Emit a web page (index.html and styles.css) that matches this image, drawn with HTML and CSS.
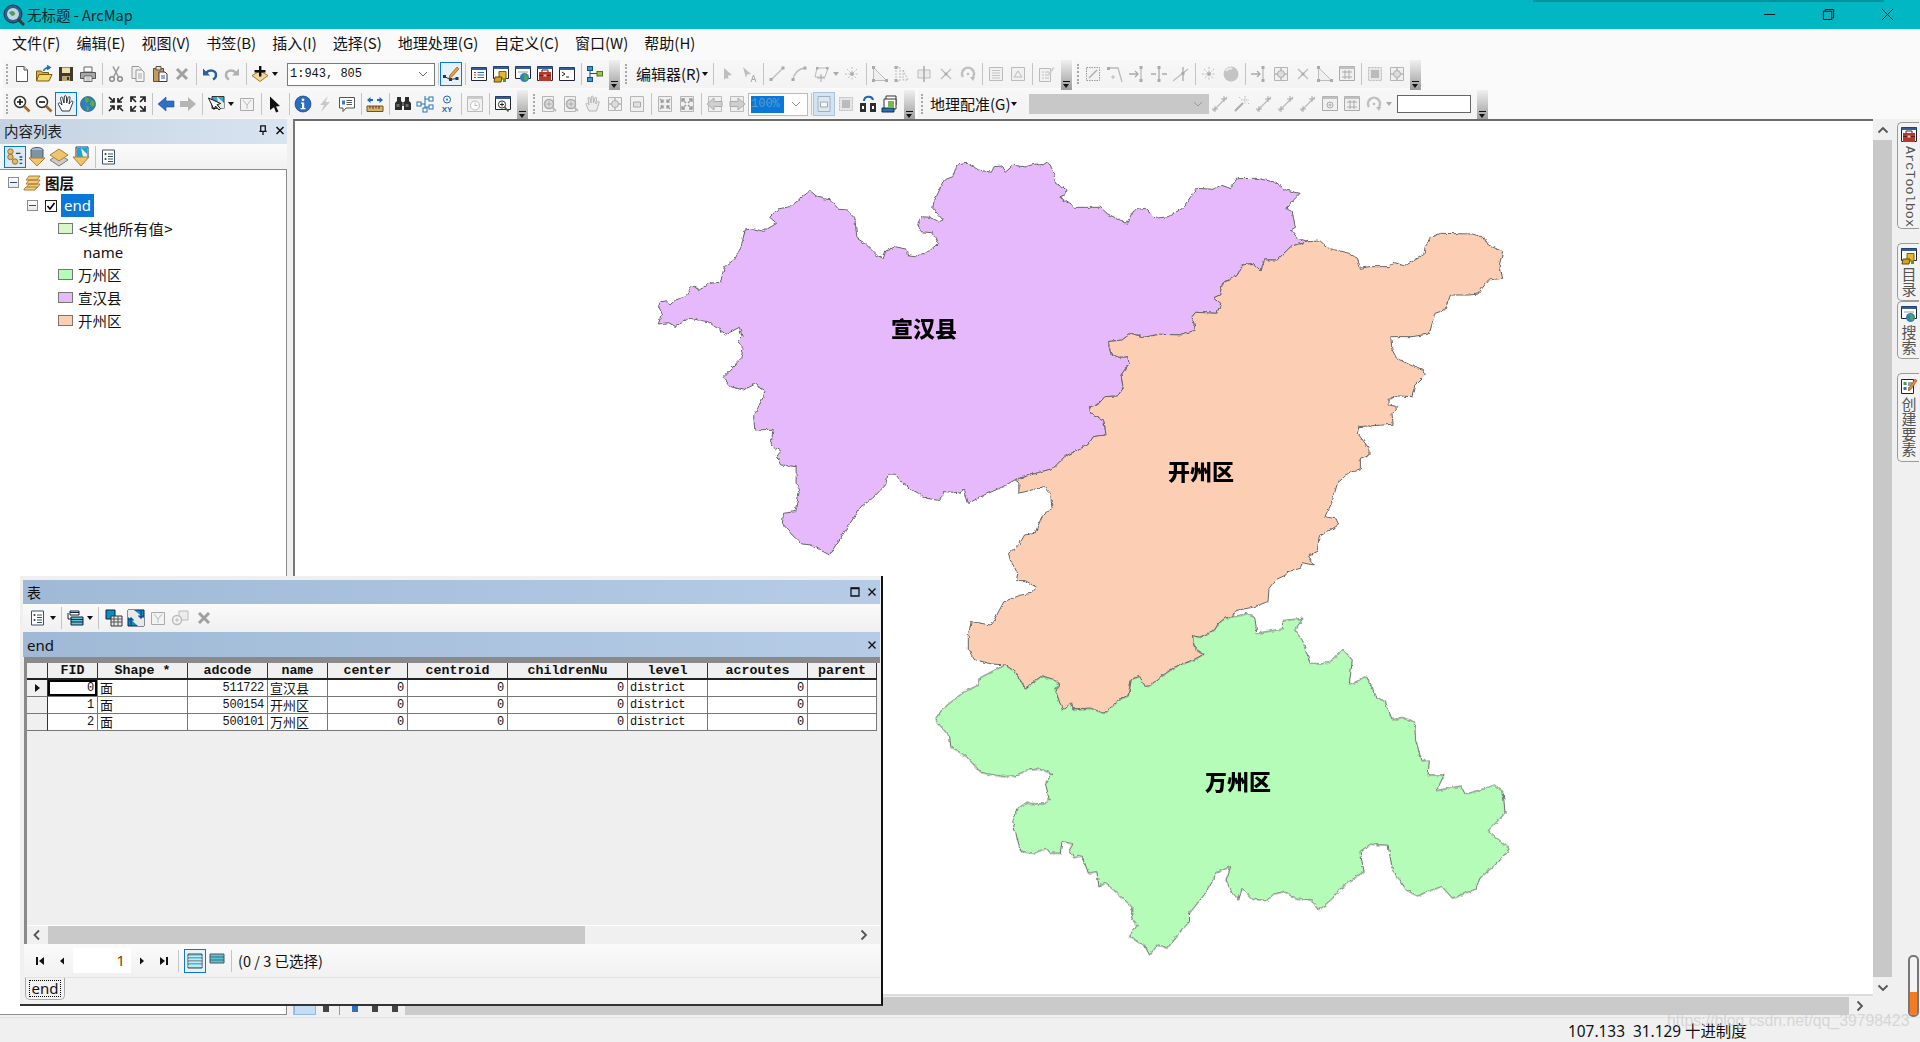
FILE: index.html
```html
<!DOCTYPE html>
<html lang="zh">
<head>
<meta charset="utf-8">
<title>无标题 - ArcMap</title>
<link rel="stylesheet" href="styles.css">
</head>
<body>
<svg class="defs" width="0" height="0">
<defs>
<symbol id="new" viewBox="0 0 18 18"><path d="M3.5 1.5h7.5l3.5 3.5v11.500H3.500z" fill="#fff" stroke="#555"/><path d="M11 1.500V5h3.500" fill="#ddd" stroke="#555"/></symbol>
<symbol id="open" viewBox="0 0 18 18"><path d="M1.500 16V6h5l1 1.500h6V10" fill="#d9b040" stroke="#7a5a10"/><path d="M1.500 16 4 9.500h13L14 16z" fill="#f5d76b" stroke="#7a5a10"/><path d="M8.500 6c1-2.500 3-3.500 5.500-3.500M12 .5l3 2-3 2" fill="none" stroke="#1d6fb8" stroke-width="1.600"/></symbol>
<symbol id="save" viewBox="0 0 18 18"><path d="M2 2h14v14H2z" fill="#40392e"/><path d="M5 2.500h8V8H5z" fill="#f0dfae"/><path d="M5 11h8v5H5z" fill="#b9a46f"/><path d="M10 12h2v3h-2z" fill="#333"/></symbol>
<symbol id="print" viewBox="0 0 18 18"><path d="M5 2h8v5H5z" fill="#fff" stroke="#666"/><path d="M1.500 7.500h15v6h-15z" fill="#a8a8a8" stroke="#555"/><path d="M5 11h8v5.500H5z" fill="#fff" stroke="#666"/><path d="M6.500 13h5M6.500 15h5" stroke="#999"/></symbol>
<symbol id="cut" viewBox="0 0 18 18"><circle cx="5" cy="14" r="2.300" fill="none" stroke="#8a8a8a" stroke-width="1.500"/><circle cx="13" cy="14" r="2.300" fill="none" stroke="#8a8a8a" stroke-width="1.500"/><path d="M6.500 12 12 1.500M11.500 12 6 1.500" stroke="#9a9a9a" stroke-width="1.600" fill="none"/></symbol>
<symbol id="copy" viewBox="0 0 18 18"><path d="M3 1.500h7l2 2v10H3z" fill="#eee" stroke="#999"/><path d="M7 5h6l2 2v9.500H7z" fill="#f5f5f5" stroke="#999"/><path d="M9 9h4M9 11h4M9 13h4" stroke="#aaa"/></symbol>
<symbol id="paste" viewBox="0 0 18 18"><path d="M2.500 3.500h10v13h-10z" fill="#c99a55" stroke="#6d4c1c"/><path d="M5 1.500h5v3.500H5z" fill="#ddd" stroke="#555"/><path d="M8 7h6l2 2v7.500H8z" fill="#fff" stroke="#335"/><path d="M10 11h4M10 13h4" stroke="#2a5da8"/></symbol>
<symbol id="del" viewBox="0 0 18 18"><path d="M4 4l10 10M14 4 4 14" stroke="#a0a0a0" stroke-width="3"/></symbol>
<symbol id="undo" viewBox="0 0 18 18"><path d="M5 8c3-4 10-3 10 2 0 2-1 3.500-3 4.500" fill="none" stroke="#2c5f9e" stroke-width="2.400"/><path d="M2 3.500v7h7z" fill="#2c5f9e"/></symbol>
<symbol id="redo" viewBox="0 0 18 18"><path d="M13 8C10 4 3 5 3 10c0 2 1 3.500 3 4.500" fill="none" stroke="#b0b0b0" stroke-width="2.400"/><path d="M16 3.500v7H9z" fill="#b0b0b0"/></symbol>
<symbol id="add" viewBox="0 0 18 18"><path d="M1 10.500 9 6l8 4.500-8 6z" fill="#f3d89b" stroke="#a97a20"/><path d="M8 1h2.400v4H14.500v2.400h-4.100v4H8v-4H3.500V5H8z" fill="#111"/></symbol>
<symbol id="edit" viewBox="0 0 18 18"><path d="M2.500 11.500 8 14.500l7-1" fill="none" stroke="#333"/><rect x="1" y="10" width="3" height="3" fill="#334"/><rect x="7" y="13" width="3" height="3" fill="#334"/><rect x="13.500" y="12" width="3" height="3" fill="#334"/><path d="M8 10 15 2l2 1.800-7 8-3 1z" fill="#f09a3c" stroke="#9a5a10" stroke-width=".7"/></symbol>
<symbol id="w-toc" viewBox="0 0 18 18"><path d="M1.500 2.500h15v13h-15z" fill="#fff" stroke="#223"/><path d="M1.500 2.500h15V5h-15z" fill="#2f5f9f"/><path d="M4 7.500h2M4 10h2M4 12.500h2" stroke="#d33"/><path d="M7.500 7.500H14M7.500 10H14M7.500 12.500H14" stroke="#2a6fb8"/></symbol>
<symbol id="w-cat" viewBox="0 0 18 18"><path d="M1.500 1.500h15v12h-15z" fill="#fff" stroke="#223"/><path d="M1.500 1.500h15V4h-15z" fill="#2f5f9f"/><path d="M7 6.500h7V14H7z" fill="#e3b72e" stroke="#7a5f10"/><path d="M3 12h7l-1 5H2z" fill="#d1a51f" stroke="#5c4a10"/><rect x="11" y="14" width="3" height="3" fill="#3c9d4a"/></symbol>
<symbol id="w-search" viewBox="0 0 18 18"><path d="M1.500 1.500h15v12h-15z" fill="#fff" stroke="#223"/><path d="M1.500 1.500h15V4h-15z" fill="#2f5f9f"/><path d="M4 6h10v2H4z" fill="#ccd"/><circle cx="10.500" cy="12.500" r="4.500" fill="#2d7fc4"/><path d="M8 10c2 0 3 1 2 3s2 3 3 2l1-3-3-3z" fill="#56a845"/></symbol>
<symbol id="w-box" viewBox="0 0 18 18"><path d="M1.500 1.500h15v14h-15z" fill="#fff" stroke="#223"/><path d="M1.500 1.500h15V4h-15z" fill="#2f5f9f"/><path d="M3 7h12v9H3z" fill="#b5382f"/><path d="M6 7V5h6v2" fill="none" stroke="#5c1a14"/><path d="M3 10.500h12" stroke="#6d1c15"/><path d="M7.500 9.500h3v2h-3z" fill="#e0d0b0"/></symbol>
<symbol id="w-py" viewBox="0 0 18 18"><path d="M1.500 2.500h15v13h-15z" fill="#fff" stroke="#223"/><path d="M1.500 2.500h15V5h-15z" fill="#2f5f9f"/><path d="M4 7l3 2-3 2M8 12h3" fill="none" stroke="#222"/></symbol>
<symbol id="w-cre" viewBox="0 0 18 18"><path d="M1.500 2.500h12v14h-12z" fill="#fff" stroke="#223"/><path d="M3.500 5h3v3h-3z" fill="#3aa14a"/><path d="M3.500 10h3v3h-3z" fill="#2f6fc0"/><path d="M8 6h4M8 8h3M8 11h2M8 13h2" stroke="#345"/><path d="M9 11l6-9 2 1.500-6 9-2.500 1z" fill="#e88a3a" stroke="#8a4a10" stroke-width=".6"/></symbol>
<symbol id="model" viewBox="0 0 18 18"><rect x="1.500" y="1.500" width="5" height="4" fill="#3a9bd8" stroke="#14507c"/><rect x="1.500" y="12.500" width="5" height="4" fill="#3a9bd8" stroke="#14507c"/><rect x="11" y="6.500" width="5.500" height="4.500" fill="#9cc64a" stroke="#55731a"/><path d="M4 5.500v7M4 8.500h7" stroke="#14507c"/></symbol>
<symbol id="zin" viewBox="0 0 18 18"><circle cx="7" cy="7" r="5.500" fill="#fff" stroke="#333" stroke-width="1.500"/><path d="M4 7h6M7 4v6" stroke="#111" stroke-width="1.600"/><path d="M11 11l5.500 5.500" stroke="#a8662a" stroke-width="2.600"/></symbol>
<symbol id="zout" viewBox="0 0 18 18"><circle cx="7" cy="7" r="5.500" fill="#fff" stroke="#333" stroke-width="1.500"/><path d="M4 7h6" stroke="#111" stroke-width="1.600"/><path d="M11 11l5.500 5.500" stroke="#a8662a" stroke-width="2.600"/></symbol>
<symbol id="pan" viewBox="0 0 18 18"><path d="M5 16 1.500 9.500c-.7-1.500 1-2.300 2-1L5 10 3.500 3.500c-.3-1.600 1.700-2 2.200-.5L7 8 7.300 1.800c.1-1.500 2-1.500 2.100 0L9.700 8l1.400-5.500c.4-1.400 2.200-1 2 .5L12 9l2-2.500c1-1.200 2.600-.2 1.800 1.200L12.500 16z" fill="#fff" stroke="#222" stroke-width=".9"/></symbol>
<symbol id="globe" viewBox="0 0 18 18"><circle cx="9" cy="9" r="7.500" fill="#2d7fc4" stroke="#2a5a80" stroke-width=".7"/><path d="M6 2.500c3 0 5 1 4 3S6 8 7 10s3 1 3 3-1 3-2 3.300M12 5c2 0 4 2 4 5l-3 2-2-3z" fill="#5faa3e"/></symbol>
<symbol id="fin" viewBox="0 0 18 18"><path d="M2 2l5 5M7 3v4H3M16 2l-5 5M11 3v4h4M2 16l5-5M7 15v-4H3M16 16l-5-5M11 15v-4h4" fill="none" stroke="#222" stroke-width="1.700"/></symbol>
<symbol id="fout" viewBox="0 0 18 18"><path d="M7 7 2.500 2.500M2 7V2h5M11 7l4.500-4.500M16 7V2h-5M7 11l-4.500 4.500M2 11v5h5M11 11l4.500 4.500M16 11v5h-5" fill="none" stroke="#222" stroke-width="1.700"/></symbol>
<symbol id="back" viewBox="0 0 18 18"><path d="M1 9l8-7v4h8v6H9v4z" fill="#2e6fc8" stroke="#1b4f9c" stroke-width=".6"/></symbol>
<symbol id="fwd" viewBox="0 0 18 18"><path d="M17 9 9 2v4H1v6h8v4z" fill="#b5b5b5"/></symbol>
<symbol id="sel" viewBox="0 0 18 18"><path d="M5 1.500h12v12H5z" fill="#2fa8d8" stroke="#333"/><path d="M10 1.500 17 8v5.500h-5z" fill="#e8e8e8"/><path d="M1.500 3 7 14.500l1.600-3.500 3.400 4 1.500-1.300-3.400-4 3.500-1.200z" fill="#fff" stroke="#111"/></symbol>
<symbol id="clr" viewBox="0 0 18 18"><path d="M2.500 3.500h13v12h-13z" fill="#f3f3f3" stroke="#aaa"/><path d="M5 5l4 5 4-5M9 10v4" fill="none" stroke="#bbb"/></symbol>
<symbol id="ptr" viewBox="0 0 18 18"><path d="M4 1.500 14 11l-4 .5 2.500 5-2.500 1-2-5.200L4 15z" fill="#111"/></symbol>
<symbol id="info" viewBox="0 0 18 18"><circle cx="9" cy="9" r="8" fill="#2a6cc0" stroke="#16407a" stroke-width=".7"/><circle cx="9" cy="4.800" r="1.400" fill="#fff"/><path d="M7 7.500h3.200V13H11.500v1.300h-5V13H8V8.800H7z" fill="#fff"/></symbol>
<symbol id="bolt" viewBox="0 0 18 18"><path d="M12 1 4 10h4l-3 7 9-10h-4.500z" fill="#c9c9c9"/></symbol>
<symbol id="pop" viewBox="0 0 18 18"><path d="M1.500 2.500h15V13H8l-3 3.500V13H1.500z" fill="#fff" stroke="#555"/><path d="M4 5.500h3v4H4z" fill="#3a7fc4"/><path d="M8.500 5.500h5.500M8.500 7.500h5.500M8.500 9.500h5.500" stroke="#555"/></symbol>
<symbol id="meas" viewBox="0 0 18 18"><path d="M1 11h16v5.500H1z" fill="#d8b26a" stroke="#6d5420"/><path d="M4 11v2.500M7 11v3M10 11v2.500M13 11v3" stroke="#4d3c16"/><path d="M1 5l3.500-3v2h2.500v2H4.500v2zM17 5l-3.500-3v2H11v2h2.500v2z" fill="#1e66bc"/></symbol>
<symbol id="find" viewBox="0 0 18 18"><path d="M3 2h4v4l1 1v8H1V8l2-2zM11 2h4v4l2 2v7h-7V7l1-1z" fill="#2c2c2c"/><path d="M8 7h2v4H8z" fill="#666"/><path d="M2.500 9h3v3h-3zM11.500 9h3v3h-3z" fill="#6a6a6a"/></symbol>
<symbol id="route" viewBox="0 0 18 18"><path d="M9 1v14M3 9h6M9 4h6M9 12h6" stroke="#2570b8" fill="none"/><rect x="1" y="7" width="4" height="4" fill="#fff" stroke="#2570b8"/><rect x="7" y="13" width="4" height="4" fill="#fff" stroke="#2570b8"/><rect x="13" y="2" width="4" height="4" fill="#fff" stroke="#2570b8"/><rect x="13" y="10" width="4" height="4" fill="#fff" stroke="#2570b8"/></symbol>
<symbol id="clock" viewBox="0 0 18 18"><path d="M1.500 1.500h15v15h-15z" fill="#f1f1f1" stroke="#bbb"/><path d="M1.500 1.500h15V4h-15z" fill="#ccc"/><circle cx="9" cy="10.500" r="4.500" fill="#fff" stroke="#bbb"/><path d="M9 7.500v3h2.500" fill="none" stroke="#bbb"/></symbol>
<symbol id="view" viewBox="0 0 18 18"><path d="M1.500 1.500h15v13h-15z" fill="#fff" stroke="#223"/><path d="M1.500 1.500h15V4h-15z" fill="#2f5f9f"/><circle cx="8" cy="9.500" r="3.600" fill="#fff" stroke="#333"/><path d="M6 9.500h4M8 7.500v4" stroke="#222"/><path d="M10.500 12l4 4.500" stroke="#555" stroke-width="1.800"/></symbol>
<symbol id="g-pz" viewBox="0 0 18 18"><path d="M2.500 1.500h11v15h-11z" fill="#f0f0f0" stroke="#b5b5b5"/><circle cx="9" cy="9" r="4.500" fill="#ddd" stroke="#aaa" stroke-width="1.500"/><path d="M6.500 9h5M9 6.500v5" stroke="#aaa"/><path d="M12 12l4 4" stroke="#bbb" stroke-width="2"/></symbol>
<symbol id="g-pan" viewBox="0 0 18 18"><path d="M5 16 2 9.500c-.6-1.300 1-2 1.800-1L5 10 4 3.500c-.2-1.400 1.500-1.700 1.900-.4L7 8l.3-6c0-1.300 1.800-1.300 1.900 0L9.500 8l1.300-5c.4-1.200 2-.9 1.800.4L11.700 9l1.800-2.200c.9-1.100 2.300-.2 1.600 1L12.500 16z" fill="#ececec" stroke="#b5b5b5"/></symbol>
<symbol id="g-fit" viewBox="0 0 18 18"><path d="M2.500 2.500h13v13h-13z" fill="#f0f0f0" stroke="#b5b5b5"/><circle cx="9" cy="9" r="3.500" fill="#ddd" stroke="#aaa"/><path d="M9 3v2M9 13v2M3 9h2M13 9h2" stroke="#999"/></symbol>
<symbol id="g-pg" viewBox="0 0 18 18"><path d="M2.500 1.500h13v15h-13z" fill="#f0f0f0" stroke="#b5b5b5"/><path d="M5.500 7h7v5h-7z" fill="#e0e0e0" stroke="#aaa"/></symbol>
<symbol id="g-fin" viewBox="0 0 18 18"><path d="M2.500 1.500h13v15h-13z" fill="#efefef" stroke="#b5b5b5"/><path d="M4 4l3 3M7 4.500V7H4.500M14 4l-3 3M11 4.500V7h2.500M4 14l3-3M7 13.500V11H4.500M14 14l-3-3M11 13.500V11h2.500" fill="none" stroke="#999" stroke-width="1.300"/></symbol>
<symbol id="g-fout" viewBox="0 0 18 18"><path d="M2.500 1.500h13v15h-13z" fill="#efefef" stroke="#b5b5b5"/><path d="M8 8 4 4M4 7V4h3M10 8l4-4M14 7V4h-3M8 10l-4 4M4 11v3h3M10 10l4 4M14 11v3h-3" fill="none" stroke="#999" stroke-width="1.300"/></symbol>
<symbol id="g-bk" viewBox="0 0 18 18"><path d="M2.500 1.500h13v15h-13z" fill="#efefef" stroke="#bbb"/><path d="M1 9l7-6v3.500h8v5H8V15z" fill="#cfcfcf" stroke="#aaa"/></symbol>
<symbol id="g-fw" viewBox="0 0 18 18"><path d="M2.500 1.500h13v15h-13z" fill="#efefef" stroke="#bbb"/><path d="M17 9l-7-6v3.500H2v5h8V15z" fill="#cfcfcf" stroke="#aaa"/></symbol>
<symbol id="g-dots" viewBox="0 0 18 18"><path d="M2.500 2.500h13v13h-13z" fill="#e6e6e6" stroke="#bbb" stroke-dasharray="2 1"/><path d="M5 5h8v8H5z" fill="#bbb"/></symbol>
<symbol id="layout" viewBox="0 0 18 18"><path d="M3 1.500h12v15H3z" fill="#e0e6ee" stroke="#9cb0c6"/><path d="M5.500 7h7v5h-7z" fill="#f6f6f6" stroke="#9aa"/></symbol>
<symbol id="lock" viewBox="0 0 18 18"><path d="M5 6c0-5 8-6 9-1" fill="none" stroke="#1e66bc" stroke-width="2"/><path d="M1 8h6v9H1zM11 8h6v9h-6z" fill="#2e2e2e"/><path d="M3 11h2v3H3zM13 11h2v3h-2z" fill="#fff"/></symbol>
<symbol id="pages" viewBox="0 0 18 18"><path d="M5 1h10v9H5z" fill="#fff" stroke="#333"/><path d="M3 4h12v10H3z" fill="#fff" stroke="#333"/><path d="M7 6h6v6H7z" fill="#7ab648"/><path d="M1 13h12v4H1z" fill="#2a6fb8" stroke="#134"/></symbol>
<symbol id="g-arr" viewBox="0 0 18 18"><path d="M6 3l8 7-4 .5.500 3.500L8 13l-2 2z" fill="#bdbdbd"/></symbol>
<symbol id="g-arra" viewBox="0 0 18 18"><path d="M3 2l8 7-4 .5L6 13z" fill="#bdbdbd"/><path d="M11 17l2.500-7 2.500 7M12 14.500h3" fill="none" stroke="#aaa"/></symbol>
<symbol id="g-line" viewBox="0 0 18 18"><path d="M3 15 15 3" stroke="#bbb" stroke-width="1.300"/><rect x="1.500" y="13" width="3" height="3" fill="#aaa"/><rect x="13.500" y="1.500" width="3" height="3" fill="#aaa"/></symbol>
<symbol id="g-curve" viewBox="0 0 18 18"><path d="M3 15C4 8 8 4 15 3" fill="none" stroke="#bbb" stroke-width="1.300"/><rect x="1.500" y="13" width="3" height="3" fill="#aaa"/><rect x="13.500" y="1.500" width="3" height="3" fill="#aaa"/></symbol>
<symbol id="g-poly" viewBox="0 0 18 18"><path d="M5 3h11l-3 9H3z" fill="none" stroke="#bbb"/><path d="M9 9v8M5 13h8" stroke="#aaa"/><rect x="4" y="2" width="2.500" height="2.500" fill="#aaa"/><rect x="14" y="2" width="2.500" height="2.500" fill="#aaa"/></symbol>
<symbol id="g-star" viewBox="0 0 18 18"><path d="M9 2v14M2 9h14M4 4l10 10M14 4 4 14" stroke="#bbb" stroke-dasharray="2 1.500"/><circle cx="9" cy="9" r="1.800" fill="#aaa"/></symbol>
<symbol id="g-tri" viewBox="0 0 18 18"><path d="M2.500 2.500v13h13z" fill="#efefef" stroke="#bbb"/><rect x="1" y="1" width="3" height="3" fill="#aaa"/><rect x="1" y="14" width="3" height="3" fill="#aaa"/><rect x="14" y="14" width="3" height="3" fill="#aaa"/></symbol>
<symbol id="g-split" viewBox="0 0 18 18"><path d="M3 2v14h4V2zM10 5l5 10h-5z" fill="none" stroke="#bbb" stroke-dasharray="2 1"/><rect x="1.500" y="1" width="3" height="3" fill="#aaa"/><rect x="1.500" y="14" width="3" height="3" fill="#aaa"/></symbol>
<symbol id="g-cross" viewBox="0 0 18 18"><path d="M3 5h12v8H3z" fill="#ececec" stroke="#bbb"/><path d="M9 1v16" stroke="#aaa" stroke-width="1.500"/></symbol>
<symbol id="g-x" viewBox="0 0 18 18"><path d="M4 14 14 4M4 4l10 10" stroke="#bbb" stroke-width="1.300"/><circle cx="9" cy="9" r="1.500" fill="#aaa"/></symbol>
<symbol id="g-rot" viewBox="0 0 18 18"><path d="M4 12a6 6 0 1 1 10 0" fill="none" stroke="#c0c0c0" stroke-width="2.600"/><path d="M11 12l3 4 2-4z" fill="#bbb"/><circle cx="9" cy="9" r="1.300" fill="#bbb"/></symbol>
<symbol id="g-tbl" viewBox="0 0 18 18"><path d="M2.500 2.500h13v13h-13z" fill="#f1f1f1" stroke="#bbb"/><path d="M5 5.500h8M5 8h8M5 10.500h8M5 13h8" stroke="#c4c4c4"/></symbol>
<symbol id="g-prop" viewBox="0 0 18 18"><path d="M2.500 2.500h13v13h-13z" fill="#f1f1f1" stroke="#bbb"/><path d="M5 12l4-6 4 6z" fill="none" stroke="#bbb"/></symbol>
<symbol id="g-sk" viewBox="0 0 18 18"><path d="M2.500 3.500h11v13h-11z" fill="#f1f1f1" stroke="#bbb"/><path d="M5 7h2M8 7h4M5 10h2M8 10h4M5 13h2M8 13h4" stroke="#c0c0c0"/><path d="M11 9l5-7 1.500 1-5 7z" fill="#cfcfcf"/></symbol>
<symbol id="g-rect" viewBox="0 0 18 18"><path d="M2.500 2.500h13v13h-13z" fill="#f2f2f2" stroke="#999" stroke-dasharray="1.500 1"/><path d="M5 13 13 5" stroke="#aaa" stroke-width="1.300"/></symbol>
<symbol id="g-bend" viewBox="0 0 18 18"><path d="M2 3h10l4 14" fill="none" stroke="#bbb" stroke-width="1.300"/><rect x="1" y="2" width="3" height="3" fill="#aaa"/><path d="M5 12h4M7 10v4" stroke="#bbb"/></symbol>
<symbol id="g-ext" viewBox="0 0 18 18"><path d="M1 9h9M7 6l3 3-3 3" fill="none" stroke="#aaa" stroke-width="1.300"/><path d="M13 1v16" stroke="#bbb" stroke-width="1.300"/><rect x="11.500" y="1" width="3" height="3" fill="#aaa"/><rect x="11.500" y="14" width="3" height="3" fill="#aaa"/></symbol>
<symbol id="g-plus" viewBox="0 0 18 18"><path d="M9 1v16M1 9h5M12 9h5" stroke="#aaa" stroke-width="1.300"/><rect x="7.500" y="1" width="3" height="3" fill="#aaa"/><rect x="7.500" y="14" width="3" height="3" fill="#aaa"/></symbol>
<symbol id="g-trim" viewBox="0 0 18 18"><path d="M1 16 16 4" stroke="#bbb" stroke-width="1.300"/><path d="M11 2v14" stroke="#aaa" stroke-width="1.300"/><rect x="9.500" y="7" width="3" height="3" fill="#aaa"/></symbol>
<symbol id="g-ball" viewBox="0 0 18 18"><circle cx="9" cy="9" r="7.500" fill="#c4c4c4"/><path d="M4 6c2-3 5-3 6-2" stroke="#eee" stroke-width="2" fill="none"/></symbol>
<symbol id="g-gcp" viewBox="0 0 18 18"><path d="M2 16 16 2" stroke="#bbb" stroke-width="1.200"/><path d="M13 1v6M10 4h6M4 11v6M1 14h6" stroke="#aaa"/></symbol>
<symbol id="g-wand" viewBox="0 0 18 18"><path d="M2 16 10 8" stroke="#aaa" stroke-width="2"/><path d="M12 1v8M8 5h8M6 2l2 2M16 9l-2-2" stroke="#bbb" stroke-dasharray="1.500 1"/></symbol>
<symbol id="g-win" viewBox="0 0 18 18"><path d="M1.500 1.500h15v14h-15z" fill="#f0f0f0" stroke="#aaa"/><path d="M1.500 1.500h15V4h-15z" fill="#c0c0c0"/><circle cx="9" cy="10" r="3" fill="none" stroke="#aaa"/><path d="M7.500 10h3M9 8.500v3" stroke="#aaa"/></symbol>
<symbol id="g-win2" viewBox="0 0 18 18"><path d="M1.500 1.500h15v14h-15z" fill="#f0f0f0" stroke="#aaa"/><path d="M1.500 1.500h15V4h-15z" fill="#c0c0c0"/><path d="M4 7h10M4 12h10M7 5v9M11 5v9" stroke="#aaa"/></symbol>
<symbol id="t-opt" viewBox="0 0 18 18"><path d="M2.500 2h12v14h-12z" fill="#fff" stroke="#3a4f6a"/><circle cx="5.500" cy="6" r="1" fill="#333"/><circle cx="5.500" cy="11" r="1" fill="#333"/><path d="M8 6h5M8 8.500h5M8 11h5M8 13.500h5" stroke="#3a4f6a"/></symbol>
<symbol id="t-rel" viewBox="0 0 18 18"><path d="M4 2h9v4H4z" fill="#fff" stroke="#123"/><path d="M4 3.500H13" stroke="#123"/><path d="M5 8h12v8H5z" fill="#5bc2dc" stroke="#123"/><path d="M5 10.500h12M5 13h12" stroke="#123"/><path d="M2 4v6h3" fill="none" stroke="#123"/></symbol>
<symbol id="t-sel" viewBox="0 0 18 18"><path d="M1 1h9v9H1z" fill="#0a8fc4" stroke="#123"/><path d="M6 7h11v10H6z" fill="#e8e8e8" stroke="#333"/><path d="M6 10h11M6 13h11M9 7v10M13 7v10" stroke="#555"/></symbol>
<symbol id="t-sw" viewBox="0 0 18 18"><path d="M1 1h16v16H1z" fill="#0a8fc4" stroke="#123"/><path d="M7 1l10 8v8h-6L1 8V1z" fill="#e8e8e8"/><path d="M4 17V9M1.500 11.500 4 9l2.500 2.500M14 1v8M11.500 6.500 14 9l2.500-2.500" fill="none" stroke="#0c4da0" stroke-width="1.500"/></symbol>
<symbol id="t-zoom" viewBox="0 0 18 18"><path d="M8 2h9v9H8z" fill="#ececec" stroke="#bbb"/><circle cx="6" cy="11" r="4.500" fill="#f4f4f4" stroke="#bbb" stroke-width="1.500"/><path d="M4 11h4M6 9v4" stroke="#bbb"/></symbol>
<symbol id="bar-all" viewBox="0 0 18 18"><path d="M2 2h14v14H2z" fill="#7bd3e6" stroke="#444"/><path d="M2 5h14M2 8h14M2 11h14M2 14h14" stroke="#fff"/><path d="M2 5.500h14M2 8.500h14M2 11.500h14" stroke="#555" stroke-width=".5"/></symbol>
<symbol id="bar-sel" viewBox="0 0 18 18"><path d="M2 2h14v9H2z" fill="#5bc2dc" stroke="#555"/><path d="M2 5h14M2 8h14" stroke="#333" stroke-width=".6"/></symbol>
<symbol id="tree-lyr" viewBox="0 0 18 18"><path d="M3 6 6 2h11l-3 4zM3 10l3-4h11l-3 4zM3 14l3-4h11l-3 4z" fill="#f3c876" stroke="#a9803a"/><path d="M1 15l2-2h11l-2 3H1z" fill="#f3c876" stroke="#a9803a"/></symbol>
<symbol id="toc-list" viewBox="0 0 22 22"><circle cx="6" cy="5" r="3" fill="#e7bb62" stroke="#8c6c2b"/><circle cx="6" cy="11" r="3" fill="#e7bb62" stroke="#8c6c2b"/><circle cx="11" cy="16" r="3" fill="#e7bb62" stroke="#8c6c2b"/><path d="M12 7h5M16 11h3M16 14h3M16 18h3" stroke="#345" stroke-width="1.400"/></symbol>
<symbol id="toc-src" viewBox="0 0 22 22"><ellipse cx="11" cy="4" rx="6" ry="2.500" fill="#a8bdd0" stroke="#4a5a6a"/><path d="M5 4v8c0 3 12 3 12 0V4" fill="#7e93a8" stroke="#4a5a6a"/><path d="M3 12l8 8 8-8z" fill="#f1c36a" stroke="#a9803a"/></symbol>
<symbol id="toc-vis" viewBox="0 0 22 22"><path d="M2 14l9-6 9 6-9 6z" fill="#ccc" stroke="#777"/><path d="M2 9l9-6 9 6-9 6z" fill="#f1c36a" stroke="#a9803a"/></symbol>
<symbol id="toc-sel" viewBox="0 0 22 22"><path d="M6 1h12v11H6z" fill="#fff" stroke="#234"/><path d="M7 2h10v9H7z" fill="#1aa6d3"/><path d="M11 2l6 6v3h-4z" fill="#eee"/><path d="M3 11l8 9 8-9z" fill="#f1c36a" stroke="#a9803a"/></symbol>
</defs>
</svg>

<header class="titlebar">
  <svg class="app-ic" viewBox="0 0 22 22"><circle cx="10" cy="10" r="9" fill="#27608a" stroke="#16384e"/><circle cx="10" cy="10" r="6" fill="#bcd6e4"/><path d="M6 9c2-3 5-2 6 0s-2 3-3 3z" fill="#5a9a58"/><path d="M15 15l6 6" stroke="#3a3a3a" stroke-width="3"/></svg>
  <span class="app-name">无标题 - ArcMap</span>
  <span class="win-shadow"></span>
  <span class="win-btn"><svg viewBox="0 0 14 14"><path d="M1 7h12" stroke="#111"/></svg></span>
  <span class="win-btn"><svg viewBox="0 0 14 14"><path d="M1.500 3.500h9v9h-9zM3.500 3.500v-2h9v9h-2" fill="none" stroke="#111" stroke-width="1.100"/></svg></span>
  <span class="win-btn"><svg viewBox="0 0 14 14"><path d="M1 1l12 12M13 1 1 13" stroke="#111"/></svg></span>
</header>

<nav class="menubar">
  <span class="mi">文件(F)</span><span class="mi">编辑(E)</span><span class="mi">视图(V)</span><span class="mi">书签(B)</span><span class="mi">插入(I)</span><span class="mi">选择(S)</span><span class="mi">地理处理(G)</span><span class="mi">自定义(C)</span><span class="mi">窗口(W)</span><span class="mi">帮助(H)</span>
</nav>

<div class="tbrow r1">
  <div class="tb t11">
    <span class="b"><svg class="i"><use href="#new"/></svg></span><span class="b"><svg class="i"><use href="#open"/></svg></span><span class="b"><svg class="i"><use href="#save"/></svg></span><span class="b"><svg class="i"><use href="#print"/></svg></span><span class="s"></span>
    <span class="b"><svg class="i"><use href="#cut"/></svg></span><span class="b"><svg class="i"><use href="#copy"/></svg></span><span class="b"><svg class="i"><use href="#paste"/></svg></span><span class="b"><svg class="i"><use href="#del"/></svg></span><span class="s"></span>
    <span class="b"><svg class="i"><use href="#undo"/></svg></span><span class="b"><svg class="i"><use href="#redo"/></svg></span><span class="s"></span>
    <span class="b"><svg class="i"><use href="#add"/></svg></span><span class="dd"></span>
    <span class="combo scale">1:943, 805<svg class="chev" viewBox="0 0 10 6"><path d="M1 1l4 4 4-4" fill="none" stroke="#666"/></svg></span>
    <span class="s thin"></span><span class="b on"><svg class="i"><use href="#edit"/></svg></span><span class="s"></span>
    <span class="b"><svg class="i"><use href="#w-toc"/></svg></span><span class="b"><svg class="i"><use href="#w-cat"/></svg></span><span class="b"><svg class="i"><use href="#w-search"/></svg></span><span class="b"><svg class="i"><use href="#w-box"/></svg></span><span class="b"><svg class="i"><use href="#w-py"/></svg></span><span class="s"></span>
    <span class="b"><svg class="i"><use href="#model"/></svg></span>
    <span class="grip"></span>
  </div>
  <div class="tb t12">
    <span class="tlabel">编辑器(R)</span><span class="dd"></span><span class="s"></span>
    <span class="b"><svg class="i"><use href="#g-arr"/></svg></span><span class="b"><svg class="i"><use href="#g-arra"/></svg></span><span class="s"></span>
    <span class="b"><svg class="i"><use href="#g-line"/></svg></span><span class="b"><svg class="i"><use href="#g-curve"/></svg></span><span class="b"><svg class="i"><use href="#g-poly"/></svg></span><span class="dd off"></span><span class="b"><svg class="i"><use href="#g-star"/></svg></span><span class="s"></span>
    <span class="b"><svg class="i"><use href="#g-tri"/></svg></span><span class="b"><svg class="i"><use href="#g-split"/></svg></span><span class="b"><svg class="i"><use href="#g-cross"/></svg></span><span class="b"><svg class="i"><use href="#g-x"/></svg></span><span class="b"><svg class="i"><use href="#g-rot"/></svg></span><span class="s"></span>
    <span class="b"><svg class="i"><use href="#g-tbl"/></svg></span><span class="b"><svg class="i"><use href="#g-prop"/></svg></span><span class="s"></span>
    <span class="b"><svg class="i"><use href="#g-sk"/></svg></span>
    <span class="grip"></span>
  </div>
  <div class="tb t13">
    <span class="b"><svg class="i"><use href="#g-rect"/></svg></span><span class="b"><svg class="i"><use href="#g-bend"/></svg></span><span class="b"><svg class="i"><use href="#g-ext"/></svg></span><span class="b"><svg class="i"><use href="#g-plus"/></svg></span><span class="b"><svg class="i"><use href="#g-trim"/></svg></span><span class="s"></span>
    <span class="b"><svg class="i"><use href="#g-star"/></svg></span><span class="b"><svg class="i"><use href="#g-ball"/></svg></span><span class="s"></span>
    <span class="b"><svg class="i"><use href="#g-ext"/></svg></span><span class="b"><svg class="i"><use href="#g-fit"/></svg></span><span class="b"><svg class="i"><use href="#g-x"/></svg></span><span class="b"><svg class="i"><use href="#g-tri"/></svg></span><span class="b"><svg class="i"><use href="#g-win2"/></svg></span><span class="s"></span>
    <span class="b"><svg class="i"><use href="#g-dots"/></svg></span><span class="b"><svg class="i"><use href="#g-fit"/></svg></span>
    <span class="grip"></span>
  </div>
</div>

<div class="tbrow r2">
  <div class="tb t21">
    <span class="b"><svg class="i"><use href="#zin"/></svg></span><span class="b"><svg class="i"><use href="#zout"/></svg></span><span class="b on"><svg class="i"><use href="#pan"/></svg></span><span class="b"><svg class="i"><use href="#globe"/></svg></span><span class="s"></span>
    <span class="b"><svg class="i"><use href="#fin"/></svg></span><span class="b"><svg class="i"><use href="#fout"/></svg></span><span class="s"></span>
    <span class="b"><svg class="i"><use href="#back"/></svg></span><span class="b"><svg class="i"><use href="#fwd"/></svg></span><span class="s"></span>
    <span class="b"><svg class="i"><use href="#sel"/></svg></span><span class="dd"></span><span class="b"><svg class="i"><use href="#clr"/></svg></span><span class="s"></span>
    <span class="b"><svg class="i"><use href="#ptr"/></svg></span><span class="s"></span>
    <span class="b"><svg class="i"><use href="#info"/></svg></span><span class="b"><svg class="i"><use href="#bolt"/></svg></span><span class="b"><svg class="i"><use href="#pop"/></svg></span><span class="s"></span>
    <span class="b"><svg class="i"><use href="#meas"/></svg></span><span class="s"></span>
    <span class="b"><svg class="i"><use href="#find"/></svg></span><span class="b"><svg class="i"><use href="#route"/></svg></span><span class="b xy"><svg class="i" viewBox="0 0 18 18"><circle cx="9" cy="4.500" r="3.500" fill="none" stroke="#1e66bc"/><circle cx="9" cy="4.500" r="1" fill="#1e66bc"/><text x="9" y="16.500" class="xytext">XY</text></svg></span><span class="s"></span>
    <span class="b"><svg class="i"><use href="#clock"/></svg></span><span class="s"></span>
    <span class="b"><svg class="i"><use href="#view"/></svg></span>
    <span class="grip"></span>
  </div>
  <div class="tb t22">
    <span class="b"><svg class="i"><use href="#g-pz"/></svg></span><span class="b"><svg class="i"><use href="#g-pz"/></svg></span><span class="b"><svg class="i"><use href="#g-pan"/></svg></span><span class="b"><svg class="i"><use href="#g-fit"/></svg></span><span class="b"><svg class="i"><use href="#g-pg"/></svg></span><span class="s"></span>
    <span class="b"><svg class="i"><use href="#g-fin"/></svg></span><span class="b"><svg class="i"><use href="#g-fout"/></svg></span><span class="s"></span>
    <span class="b"><svg class="i"><use href="#g-bk"/></svg></span><span class="b"><svg class="i"><use href="#g-fw"/></svg></span>
    <span class="combo pct"><span class="pct-sel">100%</span><svg class="chev" viewBox="0 0 10 6"><path d="M1 1l4 4 4-4" fill="none" stroke="#888"/></svg></span>
    <span class="s thin"></span><span class="b on-soft"><svg class="i"><use href="#layout"/></svg></span><span class="b"><svg class="i"><use href="#g-dots"/></svg></span><span class="b"><svg class="i"><use href="#lock"/></svg></span><span class="b"><svg class="i"><use href="#pages"/></svg></span>
    <span class="grip"></span>
  </div>
  <div class="tb t23">
    <span class="tlabel">地理配准(G)</span><span class="dd"></span>
    <span class="combo geo"><svg class="chev" viewBox="0 0 10 6"><path d="M1 1l4 4 4-4" fill="none" stroke="#999"/></svg></span>
    <span class="b"><svg class="i"><use href="#g-gcp"/></svg></span><span class="b"><svg class="i"><use href="#g-wand"/></svg></span><span class="b"><svg class="i"><use href="#g-gcp"/></svg></span><span class="b"><svg class="i"><use href="#g-gcp"/></svg></span><span class="b"><svg class="i"><use href="#g-gcp"/></svg></span><span class="b"><svg class="i"><use href="#g-win"/></svg></span><span class="b"><svg class="i"><use href="#g-win2"/></svg></span><span class="b"><svg class="i"><use href="#g-rot"/></svg></span><span class="dd off"></span>
    <span class="rot-input"></span>
    <span class="grip"></span>
  </div>
</div>

<main class="main">
  <aside class="toc">
    <div class="toc-title"><span class="toc-name">内容列表</span>
      <svg class="pin" viewBox="0 0 10 12"><path d="M2.500 1h5v6h-5zM1 7h8M5 7v4" fill="none" stroke="#111" stroke-width="1.400"/></svg>
      <svg class="pin" viewBox="0 0 10 10"><path d="M1.500 1.500l7 7M8.500 1.500l-7 7" stroke="#111" stroke-width="1.500"/></svg>
    </div>
    <div class="toc-tools">
      <span class="tt on"><svg class="i2"><use href="#toc-list"/></svg></span><span class="tt"><svg class="i2"><use href="#toc-src"/></svg></span><span class="tt"><svg class="i2"><use href="#toc-vis"/></svg></span><span class="tt"><svg class="i2"><use href="#toc-sel"/></svg></span><span class="s"></span><span class="tt"><svg class="i"><use href="#t-opt"/></svg></span>
    </div>
    <div class="tree">
      <div class="row lv0"><span class="exp"></span><svg class="i lyr"><use href="#tree-lyr"/></svg><b class="root">图层</b></div>
      <div class="row lv1"><span class="exp"></span><span class="chk"><svg viewBox="0 0 10 10"><path d="M1.500 5l2.500 3 4.500-6" fill="none" stroke="#000" stroke-width="1.600"/></svg></span><span class="selname">end</span></div>
      <div class="row lv2"><span class="sw sw-o"></span><span class="other">&lt;其他所有值&gt;</span></div>
      <div class="row lv3">name</div>
      <div class="row lv2"><span class="sw sw-g"></span>万州区</div>
      <div class="row lv2"><span class="sw sw-p"></span>宣汉县</div>
      <div class="row lv2"><span class="sw sw-r"></span>开州区</div>
    </div>
  </aside>

  <section class="mapview">
    <div class="map">
      <svg class="mapsvg" width="1580" height="880">
        <defs>
          <filter id="rough" x="-2%" y="-2%" width="104%" height="104%">
            <feTurbulence type="fractalNoise" baseFrequency="0.22" numOctaves="2" seed="4"/>
            <feDisplacementMap in="SourceGraphic" scale="3.500" xChannelSelector="R" yChannelSelector="G"/>
          </filter>
        </defs>
        <g transform="translate(-295 -121)">
          <g filter="url(#rough)">
            <g transform="translate(640 140) scale(.574 .3333)">
              <polygon class="poly purple" points="32,497 38,485 48,482 52,495 62,480 80,470 88,440 98,440 102,452 120,430 140,427 147,380 165,358 176,322 183,270 197,266 215,274 238,250 226,232 240,207 262,200 296,152 310,172 332,180 346,208 362,210 374,232 378,295 392,310 412,345 424,355 428,333 445,320 465,328 468,348 480,350 505,332 520,308 508,278 488,275 484,250 490,230 505,232 520,246 528,240 510,205 512,185 530,120 545,110 552,75 570,70 590,90 612,97 617,80 632,78 636,97 650,76 670,80 690,72 700,78 710,65 720,92 724,130 744,150 740,165 730,170 757,202 802,202 815,222 848,250 860,210 880,205 898,235 920,230 945,205 970,145 1000,148 1012,135 1028,145 1040,116 1075,115 1108,127 1125,150 1150,160 1125,205 1136,215 1142,262 1134,270 1146,295 1165,305 1135,318 1110,360 1088,360 1082,393 1068,370 1050,375 1040,407 1015,430 1010,465 1000,473 1012,490 1005,520 968,517 962,530 968,570 945,585 905,583 878,592 855,580 840,600 816,605 820,640 830,652 850,650 852,672 838,705 842,745 832,768 810,770 797,795 783,800 786,822 808,840 812,885 790,890 780,915 740,950 720,985 690,1000 655,1018 630,1042 600,1065 572,1090 565,1048 555,1058 530,1055 522,1082 500,1075 475,1052 455,1025 445,1003 432,1002 428,1035 405,1075 385,1100 330,1245 298,1215 282,1212 265,1185 248,1150 250,1120 270,1115 278,1050 272,1030 272,980 245,975 238,950 245,935 228,915 232,868 200,870 198,830 215,770 218,752 200,733 180,750 158,740 145,712 160,685 176,655 180,620 170,605 178,590 173,562 150,583 118,545 95,538 85,535 62,560 50,548 32,552 38,520"/>
              <polygon class="poly orange" points="1165,305 1185,303 1200,325 1235,340 1250,355 1255,385 1270,380 1305,380 1315,368 1332,378 1365,345 1368,320 1380,290 1395,280 1450,282 1470,292 1478,315 1503,335 1497,375 1503,415 1478,420 1460,462 1445,465 1412,465 1402,510 1385,520 1375,582 1345,590 1308,590 1310,628 1318,655 1348,680 1365,688 1368,705 1350,735 1345,770 1320,768 1305,778 1305,795 1320,800 1310,820 1312,853 1252,860 1250,880 1270,925 1270,945 1255,955 1255,990 1235,998 1215,1030 1205,1090 1193,1130 1213,1137 1217,1155 1183,1190 1180,1235 1165,1245 1173,1275 1153,1268 1151,1285 1129,1295 1125,1305 1107,1320 1096,1345 1094,1385 1067,1402 1037,1412 1032,1428 1019,1435 1008,1450 1001,1470 975,1492 962,1488 966,1525 982,1543 964,1560 931,1582 916,1600 887,1638 880,1640 870,1610 856,1618 850,1668 839,1675 808,1720 784,1705 754,1707 752,1690 735,1710 722,1645 731,1638 726,1622 700,1608 671,1645 653,1595 636,1575 612,1572 583,1560 572,1530 572,1485 577,1445 610,1455 617,1440 634,1385 664,1365 682,1360 691,1342 671,1322 656,1322 658,1300 645,1260 642,1240 660,1215 670,1185 688,1180 700,1130 718,1105 715,1060 705,1040 660,1060 660,1030 655,1018 690,1000 720,985 740,950 780,915 790,890 812,885 808,840 786,822 783,800 797,795 810,770 832,768 842,745 838,705 852,672 850,650 830,652 820,640 816,605 840,600 855,580 878,592 905,583 945,585 968,570 962,530 968,517 1005,520 1012,490 1000,473 1010,465 1015,430 1040,407 1050,375 1068,370 1082,393 1088,360 1110,360 1135,318"/>
            </g>
            <g transform="translate(880 560) scale(.4209 .3333)">
              <polygon class="poly green" points="130,478 150,445 200,395 235,375 235,355 297,315 320,335 345,385 385,348 420,362 427,378 415,385 433,450 455,430 458,447 500,445 532,460 575,415 590,408 597,358 617,350 630,380 640,378 680,340 700,322 745,300 770,283 748,265 742,228 760,232 795,210 805,190 820,175 870,162 890,172 895,220 955,207 958,182 1005,175 985,210 1003,240 1022,310 1050,312 1075,300 1100,268 1122,300 1115,370 1122,372 1155,348 1180,412 1200,425 1217,480 1240,472 1270,485 1272,540 1288,603 1305,600 1302,645 1340,645 1322,692 1380,678 1390,702 1440,685 1460,675 1480,695 1485,760 1445,812 1495,866 1470,905 1425,955 1415,988 1360,1015 1335,980 1300,995 1277,1008 1250,990 1235,960 1218,935 1207,856 1165,853 1140,875 1150,935 1115,965 1090,990 1075,1015 1042,1052 1025,1020 990,1018 960,995 935,1003 918,1022 885,1018 860,985 852,1020 835,995 822,960 833,920 800,938 770,1005 735,1060 735,1085 700,1135 683,1165 660,1155 640,1185 628,1155 590,1130 612,1095 598,1075 598,1040 555,990 535,970 520,980 515,935 495,940 480,888 460,893 450,870 458,852 432,845 428,880 405,880 395,865 365,880 335,875 330,855 315,785 328,745 345,730 390,732 402,720 393,670 408,640 380,628 350,630 320,648 292,650 240,638 205,590 168,560 165,530"/>
            </g>
          </g>
          <text class="maplabel" x="924" y="337">宣汉县</text>
          <text class="maplabel" x="1201" y="480">开州区</text>
          <text class="maplabel" x="1238" y="790">万州区</text>
        </g>
      </svg>
    </div>
    <div class="hscroll">
      <span class="view-btn on"></span><span class="view-btn m-dark"></span><span class="view-sep"></span><span class="view-btn m-blue"></span><span class="view-btn m-dark"></span><span class="view-btn m-dark"></span>
      <span class="hthumb"></span>
      <svg class="arr" viewBox="0 0 8 12"><path d="M1.500 1.500 6 6l-4.500 4.500" fill="none" stroke="#555" stroke-width="1.800"/></svg>
    </div>
  </section>

  <div class="vscroll">
    <span class="varrow"><svg viewBox="0 0 12 8"><path d="M1.500 6.500 6 2l4.500 4.500" fill="none" stroke="#555" stroke-width="1.800"/></svg></span>
    <span class="vthumb"></span>
    <span class="varrow"><svg viewBox="0 0 12 8"><path d="M1.500 1.500 6 6l4.500-4.500" fill="none" stroke="#555" stroke-width="1.800"/></svg></span>
  </div>

  <aside class="dock">
    <div class="tab t-tool"><svg class="i"><use href="#w-box"/></svg><span class="vt mono">ArcToolbox</span></div>
    <div class="tab t-cat"><svg class="i"><use href="#w-cat"/></svg><span class="vt">目录</span></div>
    <div class="tab t-sea"><svg class="i"><use href="#w-search"/></svg><span class="vt">搜索</span></div>
    <div class="tab t-cre"><svg class="i"><use href="#w-cre"/></svg><span class="vt">创建要素</span></div>
    <div class="gauge"><span class="gauge-fill"></span></div>
  </aside>
</main>

<footer class="status">
  <span class="coords">107.133&nbsp;&nbsp;31.129 十进制度</span>
  <span class="wm">https://blog.csdn.net/qq_39798423</span>
</footer>

<section class="tablewin">
  <div class="wt"><span>表</span>
    <svg class="wi" viewBox="0 0 10 10"><path d="M1 1h8v8H1z" fill="none" stroke="#111" stroke-width="1.300"/><path d="M1 1.500h8" stroke="#111" stroke-width="1.500"/></svg>
    <svg class="wi" viewBox="0 0 10 10"><path d="M1.500 1.500l7 7M8.500 1.500l-7 7" stroke="#111" stroke-width="1.400"/></svg>
  </div>
  <div class="wtools">
    <span class="b"><svg class="i"><use href="#t-opt"/></svg></span><span class="dd"></span><span class="s"></span>
    <span class="b"><svg class="i"><use href="#t-rel"/></svg></span><span class="dd"></span><span class="s wide"></span>
    <span class="b"><svg class="i"><use href="#t-sel"/></svg></span><span class="b"><svg class="i"><use href="#t-sw"/></svg></span><span class="b"><svg class="i"><use href="#clr"/></svg></span><span class="b"><svg class="i"><use href="#t-zoom"/></svg></span><span class="b far"><svg class="i"><use href="#del"/></svg></span>
  </div>
  <div class="wt sub"><span>end</span>
    <svg class="wi" viewBox="0 0 10 10"><path d="M1.500 1.500l7 7M8.500 1.500l-7 7" stroke="#111" stroke-width="1.400"/></svg>
  </div>
  <div class="gridwrap">
    <table class="grid">
      <thead><tr><th class="c0"></th><th class="c1">FID</th><th class="c2">Shape *</th><th class="c3">adcode</th><th class="c4">name</th><th class="c5">center</th><th class="c6">centroid</th><th class="c7">childrenNu</th><th class="c8">level</th><th class="c9">acroutes</th><th class="c10">parent</th></tr></thead>
      <tbody>
        <tr><td class="rh cur"><span class="tri"></span></td><td class="n active">0</td><td class="cj">面</td><td class="n">511722</td><td class="cj">宣汉县</td><td class="n">0</td><td class="n">0</td><td class="n">0</td><td class="t">district</td><td class="n">0</td><td></td></tr>
        <tr><td class="rh"></td><td class="n">1</td><td class="cj">面</td><td class="n">500154</td><td class="cj">开州区</td><td class="n">0</td><td class="n">0</td><td class="n">0</td><td class="t">district</td><td class="n">0</td><td></td></tr>
        <tr><td class="rh"></td><td class="n">2</td><td class="cj">面</td><td class="n">500101</td><td class="cj">万州区</td><td class="n">0</td><td class="n">0</td><td class="n">0</td><td class="t">district</td><td class="n">0</td><td></td></tr>
      </tbody>
    </table>
    <div class="gridfill"></div>
    <div class="gscroll">
      <svg class="arr l" viewBox="0 0 8 12"><path d="M6 1.500 1.500 6 6 10.500" fill="none" stroke="#555" stroke-width="1.800"/></svg>
      <span class="gthumb"></span>
      <svg class="arr r" viewBox="0 0 8 12"><path d="M1.500 1.500 6 6l-4.500 4.500" fill="none" stroke="#555" stroke-width="1.800"/></svg>
    </div>
  </div>
  <div class="navbar">
    <svg class="nv" viewBox="0 0 10 10"><path d="M1 1h2v8H1zM9 1v8L4 5z" fill="#111"/></svg>
    <svg class="nv" viewBox="0 0 10 10"><path d="M7 1.500v7L3 5z" fill="#111"/></svg>
    <span class="recno">1</span>
    <svg class="nv" viewBox="0 0 10 10"><path d="M3 1.500v7L7 5z" fill="#111"/></svg>
    <svg class="nv" viewBox="0 0 10 10"><path d="M9 1H7v8h2zM1 1v8l5-4z" fill="#111"/></svg>
    <span class="s nav-sep"></span>
    <span class="b on"><svg class="i"><use href="#bar-all"/></svg></span><span class="b"><svg class="i"><use href="#bar-sel"/></svg></span>
    <span class="s"></span>
    <span class="selcount">(0 / 3 已选择)</span>
  </div>
  <div class="tabs"><span class="tabname"><span class="focus">end</span></span></div>
</section>
</body>
</html>
```
FILE: styles.css
```css
* { box-sizing: border-box; }
html, body { margin: 0; padding: 0; }
body {
  width: 1920px;
  height: 1042px;
  overflow: hidden;
  position: relative;
  display: flex;
  flex-direction: column;
  background: #f0f0f0;
  color: #111;
  font-family: "Noto Sans CJK SC", "Noto Sans", sans-serif;
  font-size: 14px;
}
.defs { position: absolute; }

/* title bar */
.titlebar {
  height: 29px;
  flex: none;
  display: flex;
  align-items: center;
  background: #00b7c3;
  position: relative;
  padding: 0 3px;
}
.app-ic { width: 22px; height: 22px; flex: none; }
.app-name { margin-left: 2px; font-size: 14.500px; flex: 1; color: #10272a; }
.win-btn { width: 59px; height: 29px; display: flex; align-items: center; justify-content: center; }
.win-btn svg { width: 13px; height: 13px; }
.win-shadow { position: absolute; left: 1533px; top: 0; width: 351px; height: 2px; background: #04929c; }

/* menu */
.menubar {
  height: 31px;
  flex: none;
  display: flex;
  align-items: center;
  padding: 0 0 3px 4px;
  background: #fafafa;
}
.mi { padding: 0 8px; font-size: 15px; line-height: 20px; white-space: nowrap; }

/* toolbars */
.tbrow { flex: none; display: flex; background: #fafafa; }
.r1 { height: 30px; }
.r2 { height: 29px; }
.tb {
  display: flex;
  align-items: center;
  position: relative;
  background: linear-gradient(#f7f7f7, #f3f3f3);
  height: 28px;
  flex: none;
}
.tb::before {
  content: "";
  width: 1px;
  height: 20px;
  margin: 0 2px 0 3px;
  border-left: 2px dotted #a8a8a8;
  flex: none;
}
.t11 { width: 617px; margin-left: 3px; padding-right: 11px; }
.t12 { width: 450px; margin-left: 2px; }
.t13 { width: 347px; margin-left: 2px; }
.t21 { width: 525px; margin-left: 3px; }
.t22 { width: 385px; margin-left: 2px; padding-left: 0; }
.t23 { width: 570px; margin-left: 3px; }
.b {
  width: 22px;
  height: 24px;
  flex: none;
  display: flex;
  align-items: center;
  justify-content: center;
}
.b.on { background: #e5f1fb; border: 1px solid #0a78d7; }
.b.on-soft { background: #d4e3f1; border: 1px solid #a9c4dc; }
.i { width: 18px; height: 18px; display: block; flex: none; }
.i2 { width: 22px; height: 22px; display: block; }
.s { width: 6px; height: 22px; flex: none; position: relative; }
.s::after { content: ""; position: absolute; left: 3px; top: 0; width: 1px; height: 100%; background: #c4c4c4; }
.s.thin { width: 5px; }
.dd { width: 9px; height: 10px; flex: none; position: relative; }
.dd::after { content: ""; position: absolute; left: 1px; top: 3px; border: 3.5px solid transparent; border-top: 4px solid #111; }
.dd.off::after { border-top-color: #aaa; }
.grip {
  position: absolute;
  right: 0;
  top: 0;
  width: 11px;
  height: 30px;
  background: linear-gradient(#f0f0f0, #9b9b9b);
}
.grip::before { content: ""; position: absolute; left: 2px; top: 21px; width: 7px; height: 1px; background: #111; }
.grip::after { content: ""; position: absolute; left: 2px; top: 24px; border: 3.5px solid transparent; border-top: 4px solid #111; }
.tlabel { font-size: 15px; white-space: nowrap; margin-left: 3px; line-height: 20px; }
.t12 .tlabel { margin-left: 6px; }
.t23 .tlabel { margin-left: 4px; }
.combo {
  flex: none;
  height: 23px;
  background: #fff;
  border: 1px solid #7a7a7a;
  display: flex;
  align-items: center;
  position: relative;
  font-family: "Liberation Mono", monospace;
  font-size: 12px;
}
.scale { width: 148px; margin-left: 7px; padding-left: 2px; }
.pct { width: 60px; border-color: #bbb; margin-left: 0; }
.pct-sel { background: #0a78d7; color: #5c9ad0; width: 33px; margin-left: 2px; height: 17px; line-height: 17px; font-size: 12px; }
.geo { width: 180px; height: 20px; background: #c8c8c8; border: none; margin: 0 0 0 10px; }
.chev { position: absolute; right: 6px; top: 50%; margin-top: -3px; width: 10px; height: 6px; }
.rot-input { width: 74px; height: 18px; background: #fff; border: 1px solid #666; margin-left: 3px; flex: none; }
.xytext { font: bold 8px "Liberation Sans", sans-serif; fill: #1e66bc; text-anchor: middle; }

/* main */
.main { flex: none; height: 898px; display: flex; background: #f0f0f0; }
.toc { width: 287px; flex: none; display: flex; flex-direction: column; }
.toc-title {
  height: 25px;
  flex: none;
  display: flex;
  align-items: center;
  gap: 7px;
  padding: 0 2px 2px 4px;
  background: linear-gradient(90deg, #c4d2e1, #d8e4f0);
}
.toc-name { flex: 1; font-size: 14.500px; color: #222; line-height: 20px; }
.pin { width: 10px; height: 11px; }
.toc-tools {
  height: 25px;
  flex: none;
  display: flex;
  align-items: center;
  padding: 0 0 0 4px;
  background: linear-gradient(#fbfbfb, #f1f1f1);
}
.tt { width: 22px; height: 22px; display: flex; align-items: center; justify-content: center; flex: none; }
.tt.on { background: #dbeaf7; border: 1px solid #0a78d7; }
.tree {
  flex: 1;
  background: #fff;
  border: 1px solid #8b8b8b;
  border-left: none;
  margin-bottom: 2px;
  padding-top: 1px;
  font-size: 14.500px;
}
.row { height: 23px; display: flex; align-items: center; white-space: nowrap; }
.lv0 { padding-left: 8px; }
.lv1 { padding-left: 27px; }
.lv2 { padding-left: 58px; }
.lv3 { padding-left: 83px; font-family: "Noto Sans", sans-serif; font-size: 15px; }
.exp {
  width: 11px; height: 11px; border: 1px solid #8c8c8c; flex: none; position: relative;
  background: linear-gradient(#fff, #e8e8e8);
}
.exp::after { content: ""; position: absolute; left: 1px; top: 4px; width: 7px; height: 1px; background: #2c4a8a; }
.lyr { margin-left: 4px; }
.root { margin-left: 4px; font-size: 14.500px; }
.chk { width: 12px; height: 12px; border: 1px solid #222; margin-left: 7px; flex: none; display: flex; }
.chk svg { width: 10px; height: 10px; }
.selname { background: #0a78d7; color: #fff; font-family: "Noto Sans", sans-serif; font-size: 15px; padding: 0 3px; height: 23px; line-height: 22px; margin-left: 4px; }
.sw { width: 15px; height: 11px; border: 1px solid #777; margin-right: 5px; flex: none; }
.other { margin-left: 1px; font-size: 15px; letter-spacing: .3px; }
.sw-o { background: #d9f7c9; }
.sw-g { background: #b5fcb9; }
.sw-p { background: #e5b9fb; }
.sw-r { background: #fccfb5; }

/* map */
.mapview { width: 1580px; margin-left: 6px; flex: none; display: flex; flex-direction: column; }
.map {
  height: 877px;
  flex: none;
  background: #fff;
  border-top: 2px solid #6b6b6b;
  border-left: 2px solid #777;
  border-bottom: 2px solid #dcdcdc;
  overflow: hidden;
  position: relative;
}
.mapsvg { display: block; }
.poly { stroke: #666; stroke-width: 1; vector-effect: non-scaling-stroke; stroke-linejoin: round; }
.purple { fill: #e5b9fb; }
.orange { fill: #fccfb5; }
.green { fill: #b5fcb9; }
.maplabel {
  font-family: "Noto Sans CJK SC", sans-serif;
  font-weight: 900;
  font-size: 22px;
  text-anchor: middle;
  fill: #000;
}
.hscroll {
  height: 19px;
  flex: none;
  display: flex;
  align-items: center;
  border-left: 1px solid #bbb;
}
.view-btn { width: 20px; height: 18px; flex: none; position: relative; }
.view-btn.on { width: 22px; background: #c4ddf3; border: 1px solid #8fb9dd; }
.view-btn.m-dark::after, .view-btn.m-blue::after { content: ""; position: absolute; left: 7px; bottom: 3px; width: 6px; height: 6px; background: #444; }
.view-btn.m-blue::after { background: #2e6fc8; }
.view-sep { width: 6px; height: 18px; border-left: 1px solid #999; margin-left: 3px; flex: none; }
.hthumb { width: 1444px; height: 18px; background: #cacaca; flex: none; }
.arr { width: 8px; height: 12px; flex: none; margin-left: 7px; }

/* vertical scrollbar */
.vscroll { width: 19px; flex: none; display: flex; flex-direction: column; height: 879px; background: #f0f0f0; }
.varrow { height: 21px; flex: none; display: flex; align-items: center; justify-content: center; }
.varrow svg { width: 12px; height: 8px; }
.vthumb { flex: 1; background: #c8c8c8; }

/* dock */
.dock { width: 27px; flex: none; padding: 3px 0 0 5px; display: flex; flex-direction: column; position: relative; }
.tab {
  width: 22px;
  border: 1px solid #9a9a9a;
  border-right: none;
  border-radius: 5px 0 0 5px;
  background: #f3f3f3;
  display: flex;
  flex-direction: column;
  align-items: center;
  padding: 3px 0 0 0;
  overflow: hidden;
  color: #555;
  flex: none;
}
.t-tool { height: 107px; }
.t-cat { height: 58px; margin-top: 14px; }
.t-sea { height: 58px; }
.t-cre { height: 89px; margin-top: 14px; }
.vt { writing-mode: vertical-rl; font-size: 15px; line-height: 20px; margin-top: 2px; }
.vt.mono { font-family: "Liberation Mono", monospace; font-size: 13.500px; }
.gauge {
  position: absolute;
  left: 16px;
  top: 836px;
  width: 11px;
  height: 62px;
  border: 2px solid #777;
  border-radius: 5px;
  overflow: hidden;
  background: #f4f4f4;
  display: flex;
  align-items: flex-end;
}
.gauge-fill { width: 100%; height: 23px; background: #f57a22; }

/* status */
.status { height: 25px; flex: none; position: relative; border-top: 1px solid #e4e4e4; }
.coords { position: absolute; left: 1568px; top: 5px; font-family: "Noto Sans", "Noto Sans CJK SC", sans-serif; font-size: 15.400px; line-height: 17px; white-space: nowrap; }
.wm { position: absolute; left: 1667px; top: 0; font-family: "Liberation Sans", sans-serif; font-size: 15.800px; line-height: 5px; color: rgba(205, 205, 205, .75); white-space: nowrap; }

/* table window */
.tablewin {
  position: absolute;
  left: 20px;
  top: 576px;
  width: 863px;
  height: 430px;
  background: #f0f0f0;
  border-right: 2px solid #111;
  border-bottom: 2px solid #333;
  padding: 4px 1px 0 3px;
  display: flex;
  flex-direction: column;
}
.wt {
  height: 24px;
  flex: none;
  background: linear-gradient(90deg, #9fb9d6, #b6cce6);
  display: flex;
  align-items: center;
  gap: 7px;
  padding: 0 3px 0 4px;
  font-size: 14px;
}
.wt span { flex: 1; }
.wt.sub { height: 25px; font-family: "Noto Sans", sans-serif; font-size: 15px; }
.wi { width: 10px; height: 10px; flex: none; }
.wtools {
  height: 28px;
  flex: none;
  display: flex;
  align-items: center;
  padding-left: 4px;
  background: linear-gradient(#fafafa, #f0f0f0);
}
.s.wide { width: 8px; }
.b.far { margin-left: 2px; }
.gridwrap {
  flex: none;
  height: 287px;
  margin-left: 1px;
  border-left: 3px solid #8a8a8a;
  border-top: 6px solid #8a8a8a;
  background: #efefef;
  display: flex;
  flex-direction: column;
}
.grid {
  border-collapse: separate;
  border-spacing: 0;
  table-layout: fixed;
  width: 850px;
  flex: none;
  font-family: "Liberation Mono", monospace;
  font-size: 12px;
  letter-spacing: -.3px;
}
.grid th {
  height: 17px;
  padding: 0;
  font-size: 13.300px;
  letter-spacing: 0;
  font-weight: bold;
  line-height: 14px;
  background: #f0f0f0;
  border-right: 1px solid #333;
  border-bottom: 2px solid #222;
  white-space: nowrap;
}
.c0 { width: 21px; } .c1 { width: 50px; } .c2 { width: 90px; } .c3 { width: 80px; } .c4 { width: 60px; }
.c5 { width: 80px; } .c6 { width: 100px; } .c7 { width: 120px; } .c8 { width: 80px; } .c9 { width: 100px; } .c10 { width: 69px; }
.grid td {
  height: 17px;
  padding: 0 3px;
  line-height: 14px;
  background: #fff;
  border-right: 1px solid #777;
  border-bottom: 1px solid #777;
  white-space: nowrap;
}
.grid td.n { text-align: right; }
.grid td.t { padding-left: 2px; }
.grid td.cj { font-family: "Noto Sans CJK SC", sans-serif; font-size: 13px; letter-spacing: 0; line-height: 14px; padding: 0 0 0 2px; }
.grid td.rh { background: #f0f0f0; border-right: 1px solid #333; position: relative; }
.grid td.active { box-shadow: inset 0 0 0 2px #000; }
.tri { position: absolute; left: 8px; top: 4px; border: 4px solid transparent; border-left: 5px solid #111; }
.gridfill { flex: 1; }
.gscroll { height: 19px; flex: none; display: flex; align-items: center; background: #f0f0f0; border-top: 1px solid #fff; }
.gscroll .arr.l { margin-left: 6px; margin-right: 7px; }
.gthumb { width: 537px; height: 19px; background: #c9c9c9; flex: none; }
.gscroll .arr.r { margin-left: 275px; }
.navbar {
  height: 34px;
  flex: none;
  margin-left: 1px;
  display: flex;
  align-items: center;
  padding-left: 5px;
  background: linear-gradient(#fbfbfb, #f1f1f1);
  border-bottom: 1px solid #e2e2e2;
}
.nv { width: 10px; height: 10px; flex: none; margin: 0 6px; }
.recno { width: 58px; height: 25px; background: #fff; flex: none; text-align: right; padding-right: 6px; line-height: 25px; font-family: "Noto Sans", sans-serif; font-size: 15px; color: #7a4300; }
.s.nav-sep { margin-right: 3px; }
.selcount { margin-left: 4px; font-size: 14.500px; }
.tabs { flex: 1; padding-left: 2px; background: #f2f2f2; }
.tabname {
  display: inline-flex;
  width: 40px;
  height: 22px;
  border: 1px solid #aaa;
  border-top: none;
  border-radius: 0 0 5px 5px;
  align-items: center;
  justify-content: center;
  font-family: "Noto Sans", sans-serif;
  font-size: 15px;
}
.focus { border: 1px dotted #000; line-height: 15px; padding: 0 2px; }
```
